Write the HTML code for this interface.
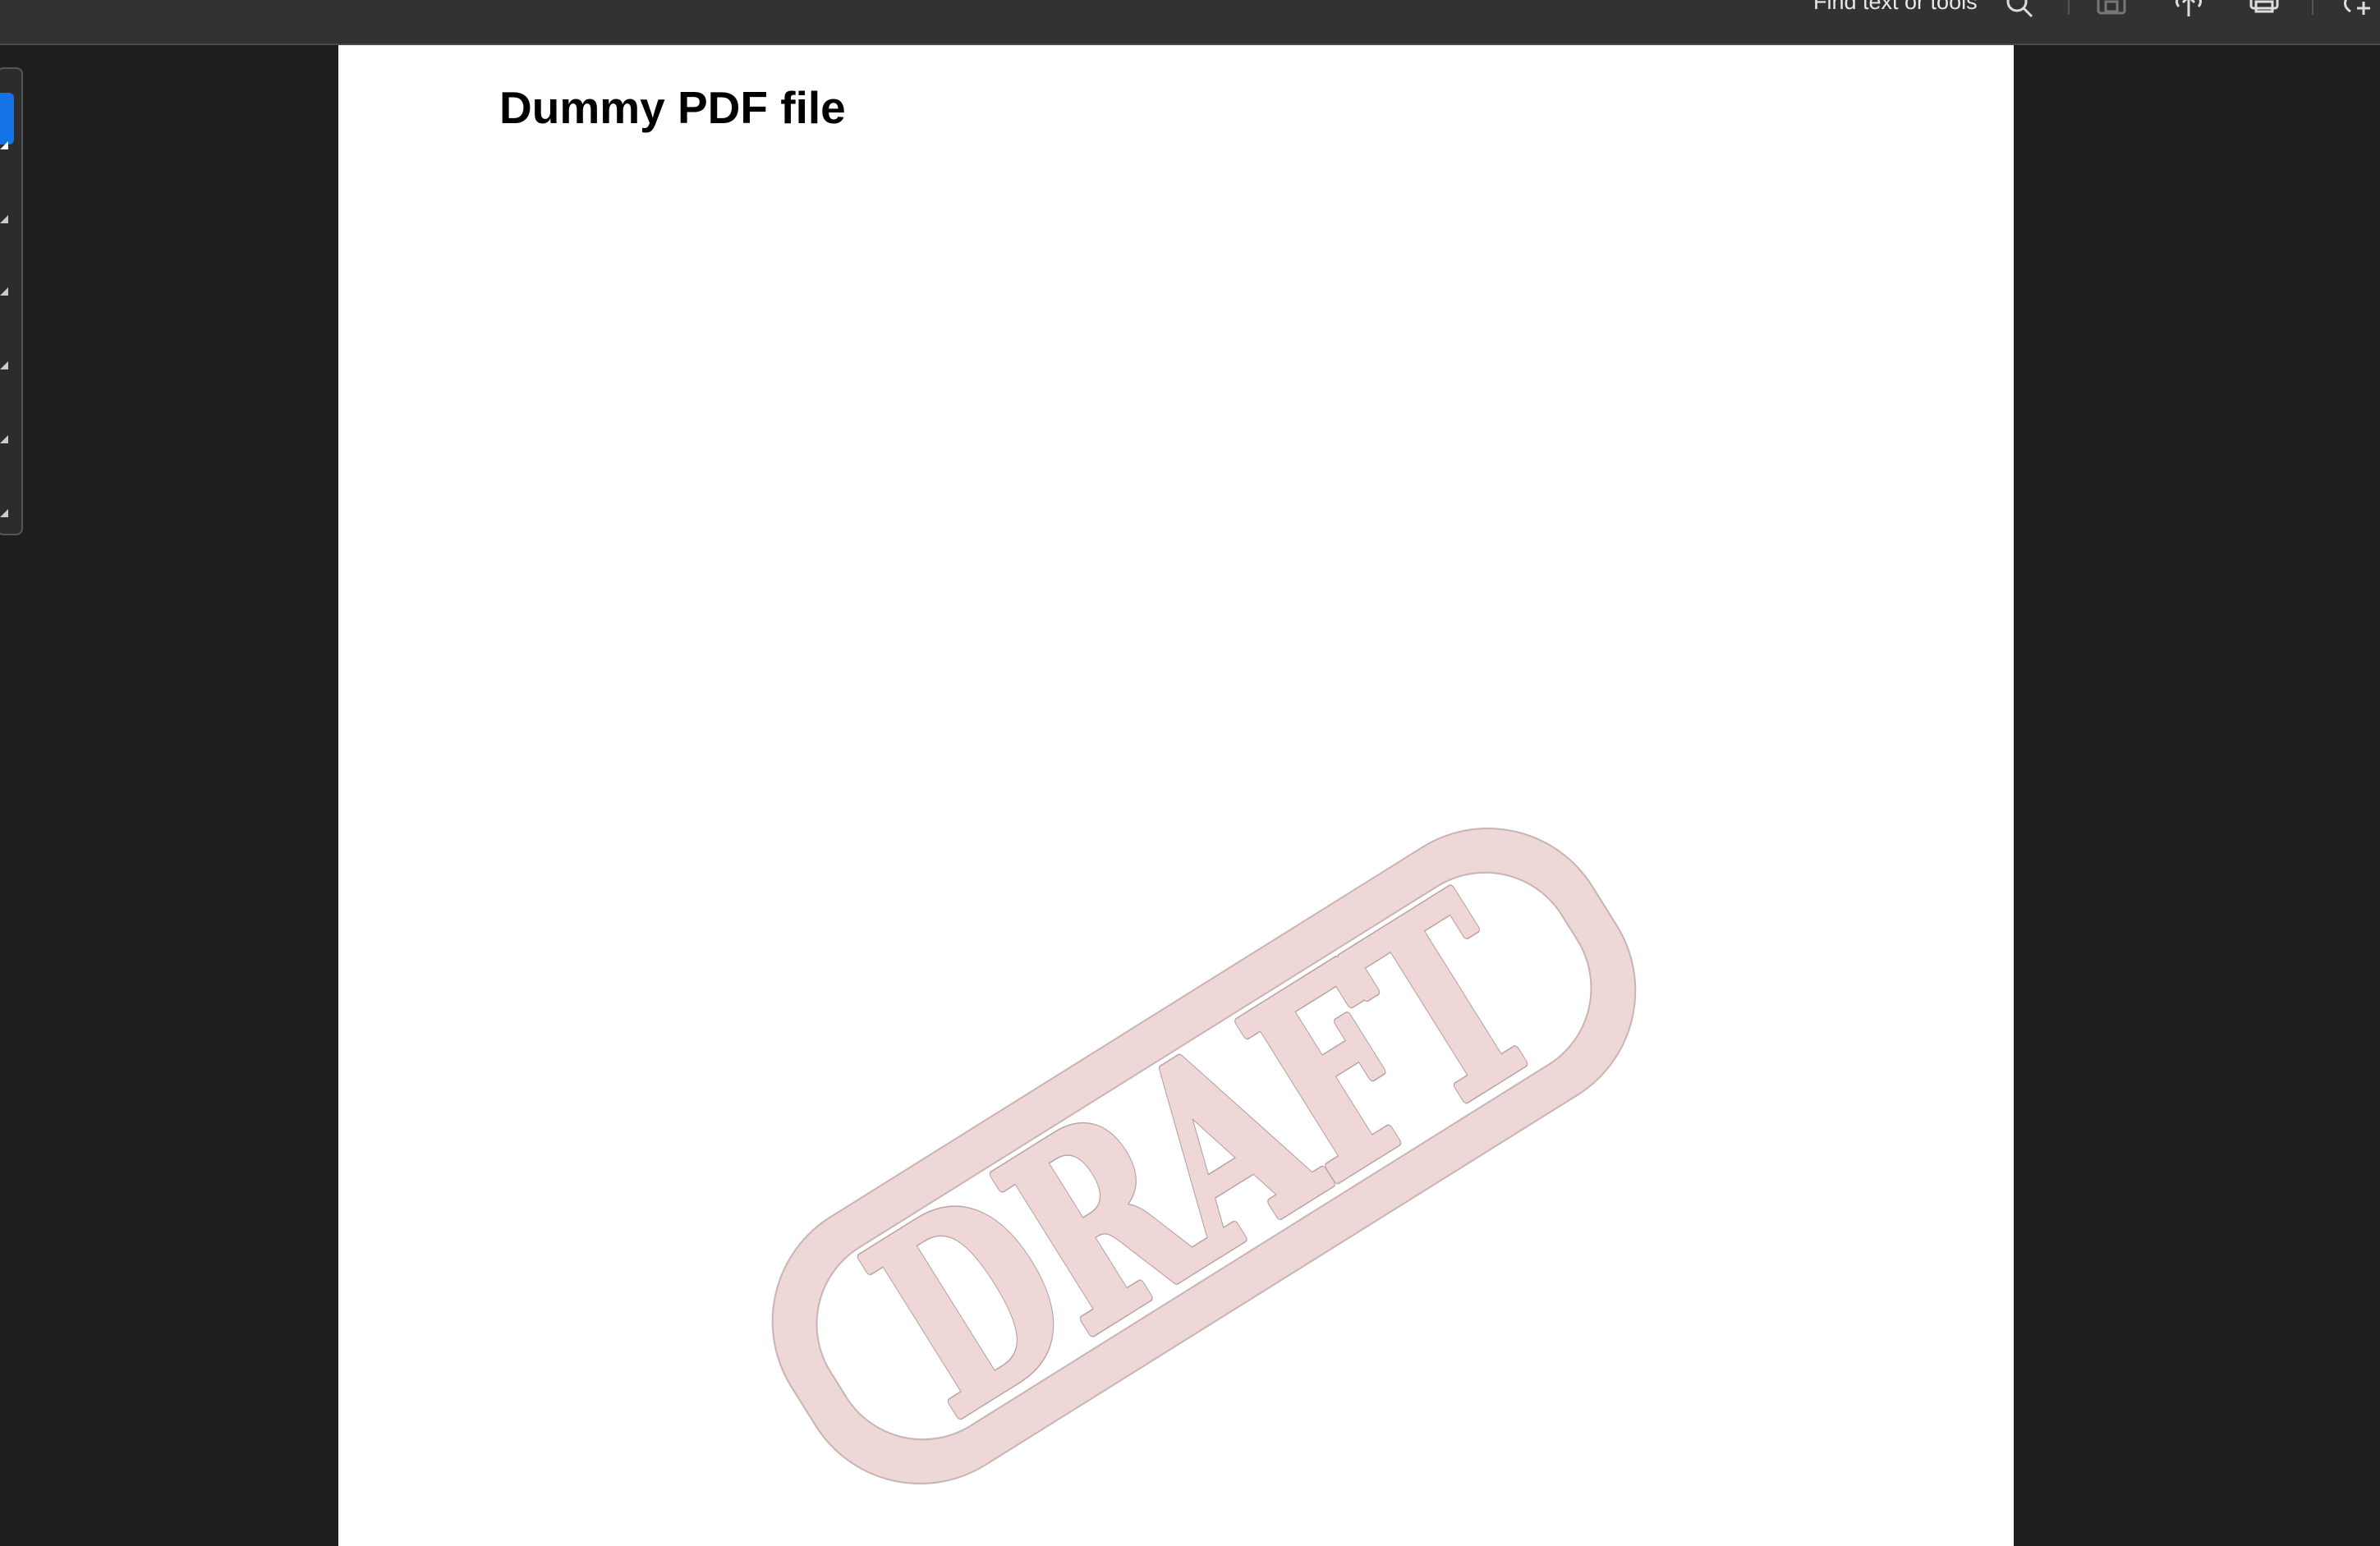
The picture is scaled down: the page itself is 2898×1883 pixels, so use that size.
<!DOCTYPE html>
<html><head><meta charset="utf-8"><style>
html,body{margin:0;padding:0;width:2898px;height:1883px;overflow:hidden;background:#1e1e1e;font-family:"Liberation Sans",sans-serif}
.top{position:absolute;left:0;top:0;width:2898px;height:53px;background:#323232;border-bottom:2px solid #4a4a4a}
.find{position:absolute;left:2208px;top:-13px;color:#e8e8e8;font-size:27px}
.page{position:absolute;left:412px;top:55px;width:2040px;height:1828px;background:#fff}
h1{position:absolute;left:196px;top:44px;margin:0;font-size:55px;font-weight:bold;color:#000}
.side{position:absolute;left:-4px;top:82px;width:28px;height:566px;background:#2c2c2c;border:2px solid #555;border-radius:8px}
.blue{position:absolute;left:0;top:113px;width:17px;height:63px;background:#1473e6;border-radius:0 6px 6px 0}
.tri{position:absolute;left:0;width:0;height:0;border-left:10px solid transparent;border-bottom:10px solid #ccc}
</style></head><body>
<div class="top">
<div class="find">Find text or tools</div>
<svg style="position:absolute;left:2440px;top:-12px" width="40" height="40" viewBox="0 0 40 40" fill="none" stroke="#ddd" stroke-width="3"><circle cx="16" cy="14" r="11"/><line x1="24" y1="22" x2="34" y2="32"/></svg>
<div style="position:absolute;left:2518px;top:0;width:2px;height:18px;background:#555"></div>
<svg style="position:absolute;left:2552px;top:-8px" width="40" height="30" fill="none" stroke="#777" stroke-width="3"><rect x="3" y="2" width="32" height="22" rx="3"/><rect x="12" y="10" width="14" height="12"/></svg>
<svg style="position:absolute;left:2645px;top:-8px" width="40" height="32" fill="none" stroke="#ddd" stroke-width="3"><path d="M8 4 Q3 10 8 16 M32 4 Q37 10 32 16 M20 28 V4 M13 11 L20 4 L27 11"/></svg>
<svg style="position:absolute;left:2738px;top:-8px" width="40" height="32" fill="none" stroke="#ddd" stroke-width="3"><rect x="3" y="4" width="32" height="14" rx="3"/><rect x="9" y="10" width="20" height="12"/></svg>
<div style="position:absolute;left:2815px;top:0;width:2px;height:18px;background:#555"></div>
<svg style="position:absolute;left:2848px;top:-8px" width="50" height="32" fill="none" stroke="#ddd" stroke-width="3"><path d="M12 2 Q2 14 14 22 M30 10 V26 M22 18 H38"/></svg>
</div>
<div class="side"></div>
<div class="blue"></div>
<div class="tri" style="top:172px;border-bottom-color:#fff"></div>
<div class="tri" style="top:262px"></div>
<div class="tri" style="top:350px"></div>
<div class="tri" style="top:440px"></div>
<div class="tri" style="top:530px"></div>
<div class="tri" style="top:620px"></div>
<div class="page"><h1>Dummy PDF file</h1></div>
<svg style="position:absolute;left:0;top:0" width="2898" height="1883">
<g transform="translate(1466,1408) rotate(-32)">
<rect x="-575" y="-178" width="1150" height="356" rx="150" fill="#eed7d7" stroke="#c9b3b3" stroke-width="2"/>
<rect x="-525" y="-128" width="1050" height="256" rx="110" fill="#fff" stroke="#c9b3b3" stroke-width="2"/>
<text x="0" y="110" text-anchor="middle" font-family="DejaVu Serif" font-weight="bold" font-size="310" textLength="860" lengthAdjust="spacingAndGlyphs" fill="#efd7d7" stroke="#b8a3a3" stroke-width="12" stroke-linejoin="round">DRAFT</text>
<text x="0" y="110" text-anchor="middle" font-family="DejaVu Serif" font-weight="bold" font-size="310" textLength="860" lengthAdjust="spacingAndGlyphs" fill="#efd7d7" stroke="#efd7d7" stroke-width="9" stroke-linejoin="round">DRAFT</text>
</g></svg>
</body></html>
